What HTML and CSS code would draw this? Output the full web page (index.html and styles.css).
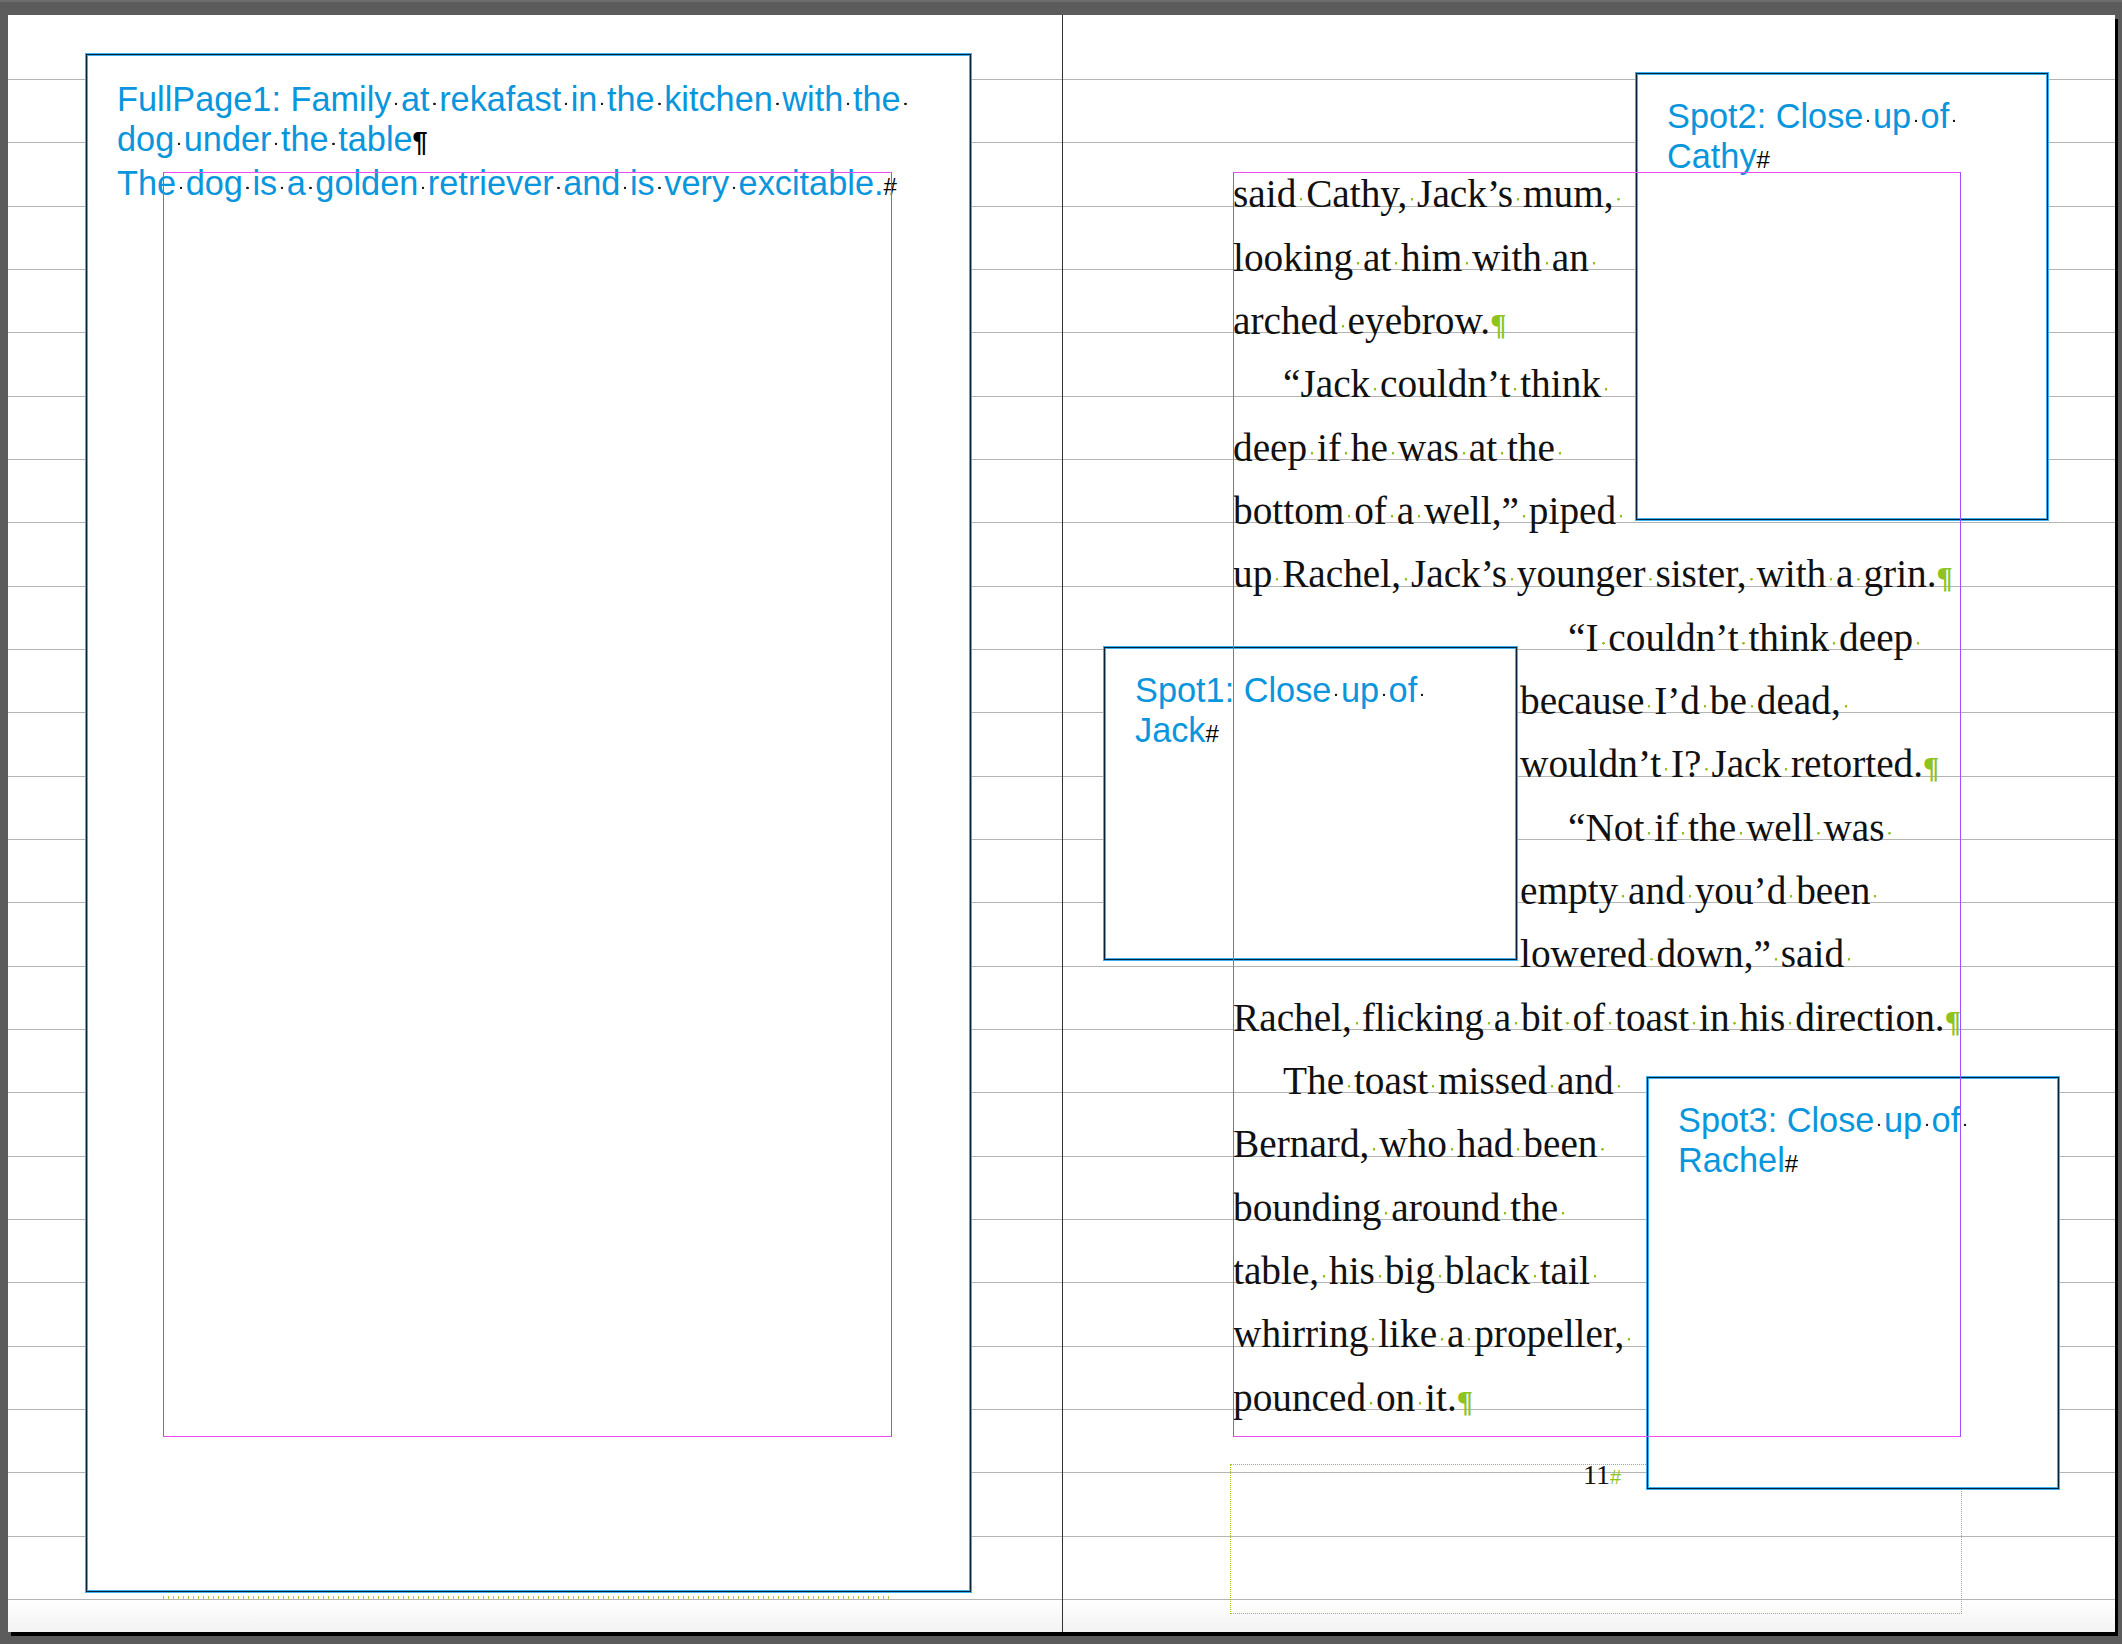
FILE: index.html
```html
<!DOCTYPE html>
<html lang="en">
<head>
<meta charset="utf-8">
<title>Spread 10–11</title>
<link rel="stylesheet" href="styles.css">
</head>
<body>
<div class="spread">
  <section class="page page-left">
    <div class="frame fullpage">
      <p class="caption"><span class="cl">FullPage1: Family<i class="s"> </i>at<i class="s"> </i>rekafast<i class="s"> </i>in<i class="s"> </i>the<i class="s"> </i>kitchen<i class="s"> </i>with<i class="s"> </i>the<i class="s"> </i></span><span class="cl">dog<i class="s"> </i>under<i class="s"> </i>the<i class="s"> </i>table<span class="pc">¶</span></span><span class="cl">The<i class="s"> </i>dog<i class="s"> </i>is<i class="s"> </i>a<i class="s"> </i>golden<i class="s"> </i>retriever<i class="s"> </i>and<i class="s"> </i>is<i class="s"> </i>very<i class="s"> </i>excitable.<span class="hash">#</span></span></p>
    </div>
    <div class="ticks"></div>
    <div class="margins margins-left"></div>
  </section>
  <section class="page page-right">
    <div class="story">
      <div class="ln">said<i class="s"> </i>Cathy,<i class="s"> </i>Jack’s<i class="s"> </i>mum,<i class="s"> </i></div>
      <div class="ln">looking<i class="s"> </i>at<i class="s"> </i>him<i class="s"> </i>with<i class="s"> </i>an<i class="s"> </i></div>
      <div class="ln">arched<i class="s"> </i>eyebrow.<span class="gp">¶</span></div>
      <div class="ln in">“Jack<i class="s"> </i>couldn’t<i class="s"> </i>think<i class="s"> </i></div>
      <div class="ln">deep<i class="s"> </i>if<i class="s"> </i>he<i class="s"> </i>was<i class="s"> </i>at<i class="s"> </i>the<i class="s"> </i></div>
      <div class="ln">bottom<i class="s"> </i>of<i class="s"> </i>a<i class="s"> </i>well,”<i class="s"> </i>piped<i class="s"> </i></div>
      <div class="ln">up<i class="s"> </i>Rachel,<i class="s"> </i>Jack’s<i class="s"> </i>younger<i class="s"> </i>sister,<i class="s"> </i>with<i class="s"> </i>a<i class="s"> </i>grin.<span class="gp">¶</span></div>
      <div class="ln wrap in">“I<i class="s"> </i>couldn’t<i class="s"> </i>think<i class="s"> </i>deep<i class="s"> </i></div>
      <div class="ln wrap">because<i class="s"> </i>I’d<i class="s"> </i>be<i class="s"> </i>dead,<i class="s"> </i></div>
      <div class="ln wrap">wouldn’t<i class="s"> </i>I?<i class="s"> </i>Jack<i class="s"> </i>retorted.<span class="gp">¶</span></div>
      <div class="ln wrap in">“Not<i class="s"> </i>if<i class="s"> </i>the<i class="s"> </i>well<i class="s"> </i>was<i class="s"> </i></div>
      <div class="ln wrap">empty<i class="s"> </i>and<i class="s"> </i>you’d<i class="s"> </i>been<i class="s"> </i></div>
      <div class="ln wrap">lowered<i class="s"> </i>down,”<i class="s"> </i>said<i class="s"> </i></div>
      <div class="ln">Rachel,<i class="s"> </i>flicking<i class="s"> </i>a<i class="s"> </i>bit<i class="s"> </i>of<i class="s"> </i>toast<i class="s"> </i>in<i class="s"> </i>his<i class="s"> </i>direction.<span class="gp">¶</span></div>
      <div class="ln in">The<i class="s"> </i>toast<i class="s"> </i>missed<i class="s"> </i>and<i class="s"> </i></div>
      <div class="ln">Bernard,<i class="s"> </i>who<i class="s"> </i>had<i class="s"> </i>been<i class="s"> </i></div>
      <div class="ln">bounding<i class="s"> </i>around<i class="s"> </i>the<i class="s"> </i></div>
      <div class="ln">table,<i class="s"> </i>his<i class="s"> </i>big<i class="s"> </i>black<i class="s"> </i>tail<i class="s"> </i></div>
      <div class="ln">whirring<i class="s"> </i>like<i class="s"> </i>a<i class="s"> </i>propeller,<i class="s"> </i></div>
      <div class="ln">pounced<i class="s"> </i>on<i class="s"> </i>it.<span class="gp">¶</span></div>
    </div>
    <div class="footer-frame"><span class="folio">11<span class="ghash">#</span></span></div>
    <div class="frame spot spot1">
      <p class="caption"><span class="cl">Spot1: Close<i class="s"> </i>up<i class="s"> </i>of<i class="s"> </i></span><span class="cl">Jack<span class="hash">#</span></span></p>
    </div>
    <div class="frame spot spot2">
      <p class="caption"><span class="cl">Spot2: Close<i class="s"> </i>up<i class="s"> </i>of<i class="s"> </i></span><span class="cl">Cathy<span class="hash">#</span></span></p>
    </div>
    <div class="frame spot spot3">
      <p class="caption"><span class="cl">Spot3: Close<i class="s"> </i>up<i class="s"> </i>of<i class="s"> </i></span><span class="cl">Rachel<span class="hash">#</span></span></p>
    </div>
    <div class="margins margins-right"></div>
  </section>
</div>
</body>
</html>
```

FILE: styles.css
```css
html, body {
  margin: 0;
  padding: 0;
}

body {
  width: 2122px;
  height: 1644px;
  overflow: hidden;
  background: linear-gradient(to bottom, #6d6d6d 0 2px, #5c5c5c 2px);
}

.spread {
  display: flex;
  width: 2107px;
  height: 1617px;
  margin: 15px 0 0 8px;
  box-shadow: 3px 4px 0 #000;
}

.page {
  position: relative;
  height: 100%;
  background-image:
    repeating-linear-gradient(to bottom, #b4b4b4 0 1px, rgba(180,180,180,0) 1px 63.333px),
    linear-gradient(to bottom, #ffffff calc(100% - 34px), #f3f3f3 100%);
  background-position: 0 64px, 0 0;
  background-size: 100% calc(100% - 64px), 100% 100%;
  background-repeat: no-repeat;
}

.page-left {
  width: 1054px;
}

.page-right {
  width: 1052px;
  border-left: 1px solid #333;
}

/* graphic frames: light-blue / dark / light-blue selection edge */
.frame {
  position: absolute;
  box-sizing: border-box;
  background: #fff;
  border: 1px solid #3fb0ee;
  box-shadow: inset 0 0 0 1px #06233d, inset 0 0 0 2px #3fb0ee;
  padding: 23px 0 0 31px;
}

.fullpage {
  left: 77px;
  top: 38px;
  width: 887px;
  height: 1540px;
  padding-top: 25px;
}

.spot1 { left: 40px;  top: 631px;  width: 415px; height: 315px; }
.spot2 { left: 572px; top: 57px;   width: 414px; height: 449px; }
.spot3 { left: 583px; top: 1061px; width: 414px; height: 414px; }

.caption {
  margin: 0;
  font-family: "Liberation Sans", Arial, sans-serif;
  font-size: 34.3px;
  line-height: 40.4px;
  color: #0a96dc;
  white-space: nowrap;
}

.cl {
  display: block;
}

/* visible space markers */
.s {
  font-style: normal;
  white-space: pre;
  background-image: radial-gradient(circle at 50% 63%, #1a1a1a 1px, rgba(0,0,0,0) 1.6px);
}

.pc {
  color: #000;
  font-family: "Liberation Sans Narrow", "Liberation Sans", sans-serif;
  font-weight: bold;
  font-size: 27px;
}

.hash {
  color: #000;
  font-family: "Liberation Sans Narrow", "Liberation Sans", sans-serif;
  font-size: 24px;
}

/* margin guides */
.margins {
  position: absolute;
  box-sizing: border-box;
  top: 157px;
  width: 729px;
  height: 1265px;
  border: 1px solid;
  border-color: #ee4ff5 #a64dff;
  pointer-events: none;
}

.margins-left { left: 155px; }
.margins-right { left: 170px; width: 728px; }

/* bottom ticks on left page */
.ticks {
  position: absolute;
  left: 155px;
  top: 1581px;
  width: 729px;
  height: 3px;
  background: repeating-linear-gradient(to right, #b2c83a 0 1px, rgba(0,0,0,0) 1px 5px);
}

/* body story */
.story {
  position: absolute;
  left: 170px;
  top: 148.4px;
  font-family: "Liberation Serif", "Times New Roman", serif;
  font-size: 39.3px;
  line-height: 63.333px;
  color: #111;
}

.ln {
  height: 63.333px;
  white-space: nowrap;
}

.ln.in { padding-left: 50px; }
.ln.wrap { padding-left: 287px; }
.ln.wrap.in { padding-left: 335px; }

.story .s {
  background-image: radial-gradient(circle at 50% 62%, #8fc31f 1px, rgba(0,0,0,0) 1.6px);
}

.gp {
  color: #8fc31f;
  font-size: 30px;
  font-weight: bold;
}

/* footer / folio frame */
.footer-frame {
  position: absolute;
  box-sizing: border-box;
  left: 167px;
  top: 1449px;
  width: 732px;
  height: 150px;
  border: 1px dotted #9cc40a;
  text-align: center;
  padding-left: 12px;
  font-family: "Liberation Serif", "Times New Roman", serif;
  font-size: 28px;
  line-height: 20px;
  color: #111;
}

.ghash {
  color: #8fc31f;
  font-family: "Liberation Sans Narrow", "Liberation Sans", sans-serif;
  font-size: 20px;
}
```
